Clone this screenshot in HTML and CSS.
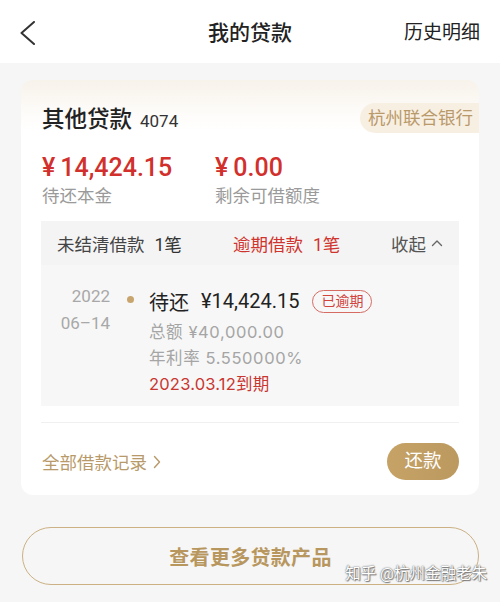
FILE: index.html
```html
<!DOCTYPE html>
<html lang="zh-CN">
<head>
<meta charset="utf-8">
<title>我的贷款</title>
<link rel="stylesheet" href="styles.css">
</head>
<body>
<header class="topbar">
  <div class="back">
    <svg width="16" height="24" viewBox="0 0 16 24"><polyline points="14,1 1.5,12 14,23" fill="none" stroke="#333" stroke-width="2" stroke-linecap="round" stroke-linejoin="round"/></svg>
  </div>
  <div class="title">我的贷款</div>
  <div class="history">历史明细</div>
</header>

<main class="page">
  <section class="card">
    <div class="card-head">
      <div class="name">其他贷款<span class="code">4074</span></div>
      <div class="bank">杭州联合银行</div>
    </div>
    <div class="amounts">
      <div class="amount">
        <div class="num"><span class="yen">¥</span>14,424.15</div>
        <div class="label">待还本金</div>
      </div>
      <div class="amount">
        <div class="num"><span class="yen">¥</span>0.00</div>
        <div class="label">剩余可借额度</div>
      </div>
    </div>

    <div class="loans">
      <div class="loans-head">
        <div class="stat">未结清借款<span class="cnt">1笔</span></div>
        <div class="stat overdue">逾期借款<span class="cnt">1笔</span></div>
        <div class="fold">收起
          <svg width="12" height="8" viewBox="0 0 12 8"><polyline points="1.5,6.5 6,2 10.5,6.5" fill="none" stroke="#666" stroke-width="1.4" stroke-linecap="round" stroke-linejoin="round"/></svg>
        </div>
      </div>
      <div class="loan-item">
        <div class="date">2022<br>06–14</div>
        <div class="dot"></div>
        <div class="info">
          <div class="due">待还<span class="due-amt">¥14,424.15</span><span class="tag">已逾期</span></div>
          <div class="detail">总额 ¥40,000.00</div>
          <div class="detail">年利率 5.550000%</div>
          <div class="detail red">2023.03.12到期</div>
        </div>
      </div>
    </div>

    <div class="card-foot">
      <div class="records">全部借款记录
        <svg width="8" height="14" viewBox="0 0 8 14"><polyline points="1.5,1.5 6.5,7 1.5,12.5" fill="none" stroke="#b89a6a" stroke-width="1.4" stroke-linecap="round" stroke-linejoin="round"/></svg>
      </div>
      <div class="repay">还款</div>
    </div>
  </section>

  <div class="more">查看更多贷款产品</div>
</main>

<div class="watermark">知乎 @杭州金融老朱</div>
</body>
</html>
```
FILE: styles.css
```css
* { box-sizing: border-box; }
html, body { margin: 0; padding: 0; }
body {
  width: 500px;
  height: 602px;
  overflow: hidden;
  position: relative;
  background: #f6f6f6;
  font-family: "Roboto", "Noto Sans CJK SC", sans-serif;
  color: #222;
}

.topbar {
  height: 63px;
  background: #fff;
  display: grid;
  grid-template-columns: 1fr auto 1fr;
  align-items: center;
  padding: 0 20px 0 20px;
}
.back { display: flex; align-items: center; padding-top: 2px; }
.title { font-size: 21px; font-weight: 500; color: #222; line-height: 20px; margin-top: 2px; }
.history { justify-self: end; font-size: 19px; color: #222; margin-top: -2px; }

.page { padding: 17px 21px 0 21px; }

.card {
  background: linear-gradient(#f7f2ea 0px, #fdfbf8 30px, #fff 50px);
  border-radius: 12px;
  padding: 23px 0 0 0;
  height: 415px;
}
.card-head {
  display: flex;
  justify-content: space-between;
  align-items: center;
  height: 30px;
}
.name {
  padding-left: 21px;
  font-size: 22.5px;
  font-weight: 500;
  color: #222;
  display: flex;
  align-items: baseline;
  margin-top: -3px;
}
.code { font-size: 17px; font-weight: 400; color: #333; margin-left: 8px; }
.bank {
  height: 30px;
  line-height: 30px;
  padding: 0 6px 0 8px;
  background: #f8efe3;
  color: #b8996a;
  font-size: 17.5px;
  border-radius: 15px 0 0 15px;
}

.amounts {
  display: flex;
  padding-left: 21px;
  margin-top: 21px;
}
.amount { width: 173px; }
.num {
  font-size: 25px;
  line-height: 28px;
  color: #d2302c;
  font-weight: 500;
}
.yen { margin-right: 5px; }
.label {
  font-size: 17.5px;
  line-height: 24px;
  margin-top: 2px;
  color: #9a9a9a;
}

.loans {
  margin: 13px 20px 0 20px;
  background: #f6f6f6;
}
.loans-head {
  height: 44px;
  display: flex;
  align-items: center;
  padding: 0 16px 0 16px;
  background: #f4f4f4;
  font-size: 17.5px;
  color: #444;
  white-space: nowrap;
}
.stat { width: 176px; flex: none; }
.stat.overdue { width: auto; }
.cnt { margin-left: 10px; color: #333; }
.overdue, .overdue .cnt { color: #d0342e; }
.fold {
  margin-left: auto;
  display: flex;
  align-items: center;
  gap: 5px;
  color: #555;
}

.loan-item {
  display: flex;
  align-items: flex-start;
  height: 141px;
  background: #f7f7f7;
}
.date {
  width: 69px;
  text-align: right;
  margin-top: 18px;
  font-size: 17px;
  line-height: 27px;
  color: #a8a8a8;
}
.dot {
  width: 7px;
  height: 7px;
  border-radius: 50%;
  background: #c9a56e;
  margin: 31px 15px 0 17px;
}
.info { margin-top: 20px; }
.due {
  display: flex;
  align-items: center;
  height: 32px;
  font-size: 20px;
  color: #222;
}
.due-amt { margin-left: 12px; }
.tag {
  margin-left: 13px;
  height: 23px;
  line-height: 21px;
  padding: 0 8px;
  border: 1.2px solid #d66b64;
  border-radius: 12px;
  color: #d0443d;
  font-size: 14px;
}
.detail {
  font-family: "Inter", "Noto Sans CJK SC", sans-serif;
  font-size: 16.5px;
  letter-spacing: 0.6px;
  line-height: 26px;
  color: #a5a5a5;
}
.due + .detail { margin-top: 2px; }
.detail.red { color: #c8362f; letter-spacing: 0.2px; }

.card-foot {
  margin: 16px 20px 0 20px;
  border-top: 1px solid #f0f0f0;
  padding-top: 20px;
  display: flex;
  justify-content: space-between;
  align-items: center;
}
.records {
  display: flex;
  align-items: center;
  gap: 6px;
  font-size: 17.5px;
  color: #b89a6a;
  padding-left: 1px;
}
.repay {
  width: 72px;
  height: 37px;
  line-height: 37px;
  text-align: center;
  border-radius: 19px;
  background: linear-gradient(90deg, #c6a266, #bb995f);
  color: #fff;
  font-size: 18.5px;
}

.more {
  margin: 32px 0 0 1px;
  height: 58px;
  border: 1.5px solid #cbb183;
  border-radius: 29px;
  display: flex;
  align-items: center;
  justify-content: center;
  color: #b8975f;
  font-size: 20px;
  font-weight: 700;
  letter-spacing: 0.3px;
}

.watermark {
  position: absolute;
  right: 13px;
  top: 561px;
  font-size: 15.5px;
  color: #fff;
  text-shadow: 0 0 1px #666, 0 0 2px #888, 1px 1px 1px #777;
}
```
